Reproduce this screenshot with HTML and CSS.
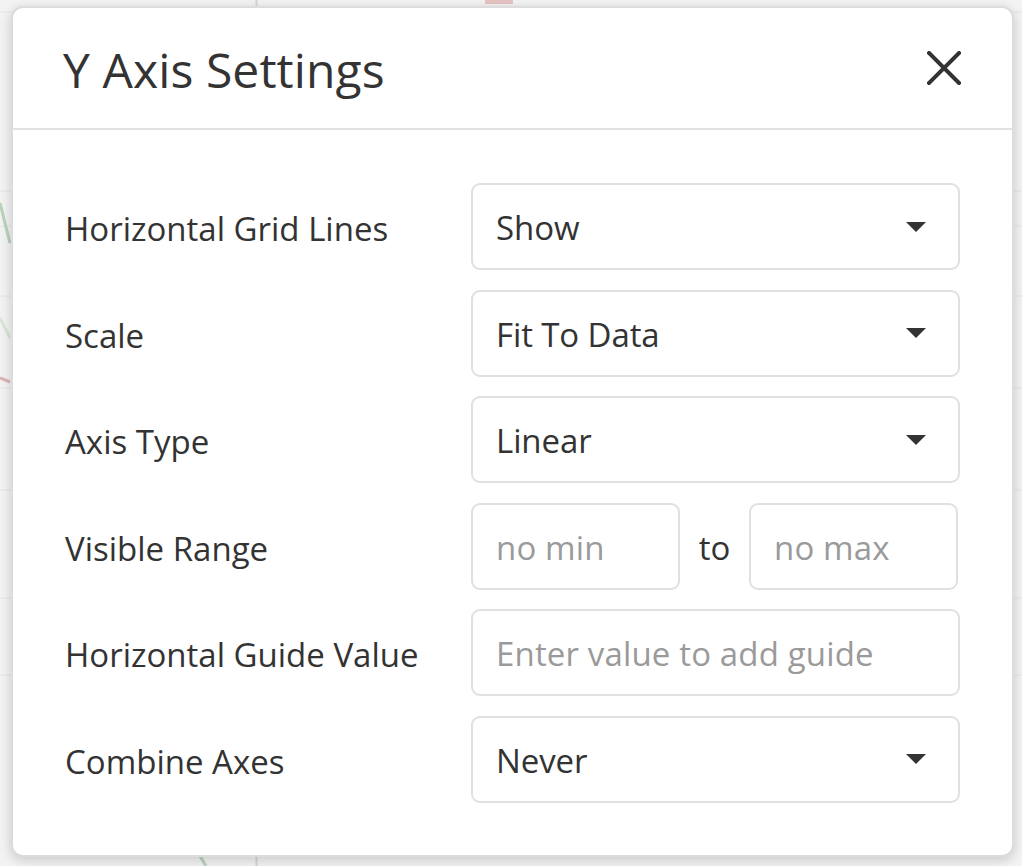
FILE: index.html
```html
<!DOCTYPE html>
<html lang="en">
<head>
<meta charset="utf-8">
<title>Y Axis Settings</title>
<link rel="stylesheet" href="styles.css">
</head>
<body>
<div class="chart">
  <svg class="chart-svg" width="1022" height="866" viewBox="0 0 1022 866">
    <line x1="256.5" y1="0" x2="256.5" y2="866" stroke="#d6d6d6" stroke-width="2"/>
    <line x1="0" y1="191" x2="1022" y2="191" stroke="#e4e4e4" stroke-width="1"/>
    <line x1="0" y1="296" x2="1022" y2="296" stroke="#e4e4e4" stroke-width="1"/>
    <line x1="0" y1="388" x2="1022" y2="388" stroke="#e4e4e4" stroke-width="1"/>
    <line x1="0" y1="490" x2="1022" y2="490" stroke="#e4e4e4" stroke-width="1"/>
    <line x1="0" y1="598" x2="1022" y2="598" stroke="#e4e4e4" stroke-width="1"/>
    <line x1="0" y1="675" x2="1022" y2="675" stroke="#e4e4e4" stroke-width="1"/>
    <line x1="0" y1="226" x2="1022" y2="226" stroke="#e4e4e4" stroke-width="1"/>
    <line x1="0" y1="12" x2="1022" y2="12" stroke="#e4e4e4" stroke-width="1"/>
    <polyline points="0,203 10,243" fill="none" stroke="#b9d3b9" stroke-width="3"/>
    <polyline points="0,318 10,338" fill="none" stroke="#d6e8d6" stroke-width="3"/>
    <polyline points="0,378 10,382" fill="none" stroke="#dbb3b3" stroke-width="3"/>
    <polyline points="200,856 206,866" fill="none" stroke="#b9d3b9" stroke-width="3"/>
    <rect x="485" y="0" width="28" height="4" fill="#e6c4c4"/>
  </svg>
</div>

<div class="modal" role="dialog" aria-labelledby="modal-title">
  <header class="modal-header">
    <h1 id="modal-title" class="modal-title">Y Axis Settings</h1>
    <button class="close-btn" type="button" aria-label="Close">
      <svg width="34" height="34" viewBox="0 0 34 34">
        <path d="M2 2 L32 32 M32 2 L2 32" stroke="#333" stroke-width="4" stroke-linecap="square" fill="none"/>
      </svg>
    </button>
  </header>

  <div class="modal-body">
    <div class="form-grid">
      <label class="field-label">Horizontal Grid Lines</label>
      <div class="select"><span class="select-value">Show</span><span class="caret"></span></div>

      <label class="field-label">Scale</label>
      <div class="select"><span class="select-value">Fit To Data</span><span class="caret"></span></div>

      <label class="field-label">Axis Type</label>
      <div class="select"><span class="select-value">Linear</span><span class="caret"></span></div>

      <label class="field-label">Visible Range</label>
      <div class="range">
        <input class="text-input" type="text" placeholder="no min">
        <span class="range-sep">to</span>
        <input class="text-input" type="text" placeholder="no max">
      </div>

      <label class="field-label">Horizontal Guide Value</label>
      <input class="text-input wide" type="text" placeholder="Enter value to add guide">

      <label class="field-label">Combine Axes</label>
      <div class="select"><span class="select-value">Never</span><span class="caret"></span></div>
    </div>
  </div>
</div>
</body>
</html>
```

FILE: styles.css
```css
* {
  box-sizing: border-box;
}

html, body {
  margin: 0;
  padding: 0;
}

body {
  width: 1022px;
  height: 866px;
  overflow: hidden;
  background: #f3f3f3;
  font-family: "Open Sans", "Noto Sans", "Liberation Sans", sans-serif;
  color: #333;
  position: relative;
}

.chart {
  width: 1022px;
  height: 866px;
}

.chart-svg {
  display: block;
}

.modal {
  position: absolute;
  top: 6px;
  left: 11px;
  width: 1003px;
  height: 851px;
  background: #fff;
  border: 2px solid #dcdcdc;
  border-radius: 12px;
  box-shadow: 0 3px 12px rgba(0, 0, 0, 0.18);
  display: flex;
  flex-direction: column;
}

.modal-header {
  height: 122px;
  border-bottom: 2px solid #e2e2e2;
  display: flex;
  align-items: center;
  justify-content: space-between;
  padding: 0 51px 0 50px;
}

.modal-title {
  margin: 0;
  font-size: 48px;
  font-weight: 400;
  letter-spacing: 0.1px;
  color: #333;
  line-height: 1;
  padding-top: 4px;
}

.close-btn {
  border: 0;
  background: transparent;
  padding: 0;
  width: 34px;
  height: 34px;
  display: flex;
  align-items: center;
  justify-content: center;
  margin-top: 0;
}

.modal-body {
  padding: 53px 52px 0 52px;
}

.form-grid {
  display: grid;
  grid-template-columns: 406px 489px;
  grid-auto-rows: 87px;
  row-gap: 19.6px;
  align-items: center;
}

.field-label {
  font-size: 33px;
  letter-spacing: 0;
  color: #333;
  padding-left: 0;
  padding-top: 4px;
}

.select,
.text-input {
  height: 87px;
  border: 2px solid #e0e0e0;
  border-radius: 9px;
  background: #fff;
}

.select {
  display: flex;
  align-items: center;
  justify-content: space-between;
  padding: 0 32px 0 23px;
}

.select-value {
  font-size: 33px;
  letter-spacing: -0.1px;
  color: #333;
  padding-top: 2px;
}

.caret {
  width: 0;
  height: 0;
  border-left: 10px solid transparent;
  border-right: 10px solid transparent;
  border-top: 10px solid #333;
}

.text-input {
  display: block;
  width: 209px;
  padding: 2px 0 0 23px;
  font-family: "Open Sans", "Noto Sans", "Liberation Sans", sans-serif;
  font-size: 33px;
  letter-spacing: 0.15px;
  color: #333;
  outline: none;
}

.text-input::placeholder {
  color: #9a9a9a;
  opacity: 1;
}

.text-input.wide {
  width: 489px;
}

.range {
  display: flex;
  align-items: center;
  width: 487px;
}

.range-sep {
  flex: 1;
  text-align: center;
  font-size: 33px;
  color: #333;
  padding-top: 2px;
}
```
